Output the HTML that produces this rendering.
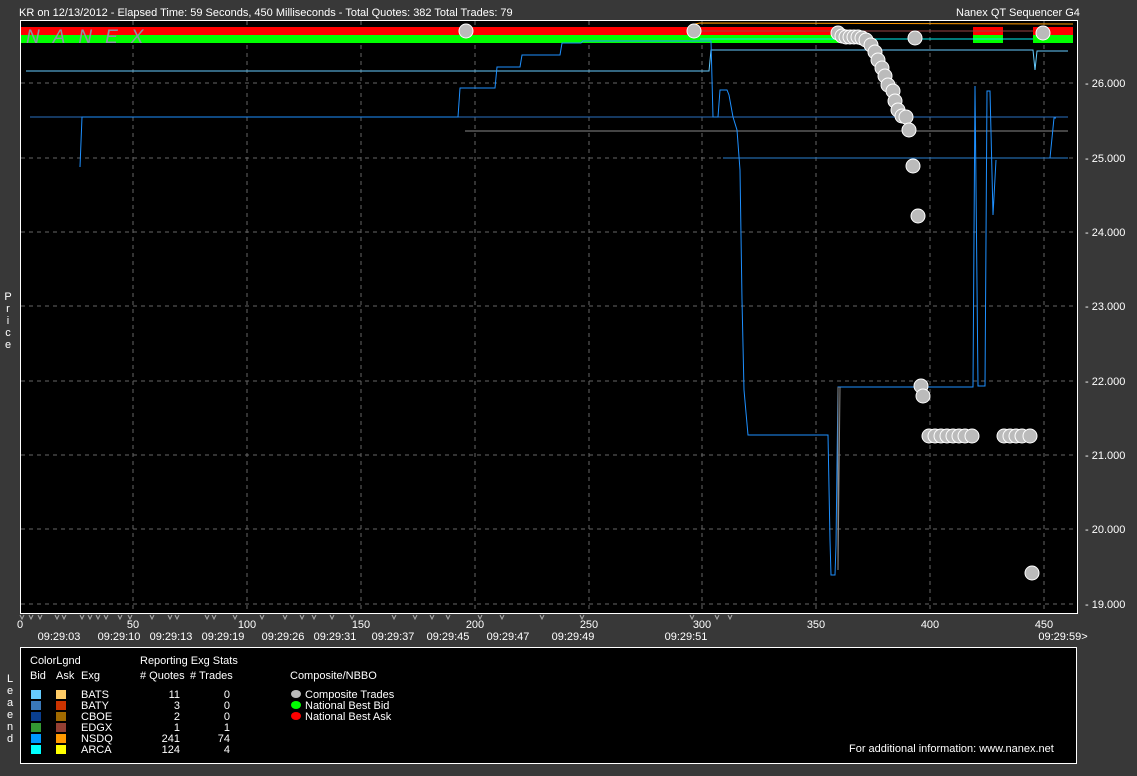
<!DOCTYPE html>
<html><head><meta charset="utf-8"><style>
body{margin:0;background:#383838;width:1137px;height:776px;overflow:hidden;font-family:"Liberation Sans",sans-serif}
svg{display:block}
text{font-family:"Liberation Sans",sans-serif;font-size:11px;fill:#fff}
</style></head><body>
<svg width="1137" height="776" viewBox="0 0 1137 776">
<rect width="1137" height="776" fill="#383838"/>
<text x="19" y="16">KR on 12/13/2012  -  Elapsed Time: 59 Seconds, 450 Milliseconds  -  Total Quotes: 382  Total Trades: 79</text>
<text x="956" y="16">Nanex QT Sequencer G4</text>
<rect x="20.5" y="20.5" width="1057" height="593" fill="#000" stroke="#fff"/>
<g stroke="#666" stroke-dasharray="4,4" stroke-width="1">
<line x1="133" y1="21" x2="133" y2="613"/><line x1="247" y1="21" x2="247" y2="613"/><line x1="361" y1="21" x2="361" y2="613"/><line x1="475" y1="21" x2="475" y2="613"/><line x1="589" y1="21" x2="589" y2="613"/><line x1="702" y1="21" x2="702" y2="613"/><line x1="816" y1="21" x2="816" y2="613"/><line x1="930" y1="21" x2="930" y2="613"/><line x1="1044" y1="21" x2="1044" y2="613"/>
<line x1="21" y1="83" x2="1077" y2="83"/><line x1="21" y1="158" x2="1077" y2="158"/><line x1="21" y1="232" x2="1077" y2="232"/><line x1="21" y1="306" x2="1077" y2="306"/><line x1="21" y1="381" x2="1077" y2="381"/><line x1="21" y1="455" x2="1077" y2="455"/><line x1="21" y1="529" x2="1077" y2="529"/><line x1="21" y1="604" x2="1077" y2="604"/>
</g>
<rect x="21" y="27" width="818" height="8" fill="#f00"/><rect x="21" y="35" width="818" height="8" fill="#0f0"/>
<rect x="973" y="27" width="30" height="8" fill="#f00"/><rect x="973" y="35" width="30" height="8" fill="#0f0"/>
<rect x="1033" y="27" width="40" height="8" fill="#f00"/><rect x="1033" y="35" width="40" height="8" fill="#0f0"/>
<text x="26" y="43" style="font-size:19px;font-style:italic;letter-spacing:13px;fill:#8a96a6">NANEX</text>
<polyline points="690,25 700,23 1073,24" fill="none" stroke="#f90"/>
<polyline points="700,31 1033,31" fill="none" stroke="#944"/>
<polyline points="700,39 1033,39" fill="none" stroke="#0ee"/>
<polyline points="26,71 709,71 711,50 1033,50 1035,70 1037,51 1068,51" fill="none" stroke="#6cf"/>
<polyline points="30,117 1068,117" fill="none" stroke="#2a6fc0"/>
<polyline points="465,131 1068,131" fill="none" stroke="#888"/>
<polyline points="723,158 1068,158" fill="none" stroke="#2a7fd0"/>
<polyline points="80,167 82,117 458,117 460,88 495,88 497,67 520,67 522,55 560,55 562,43 581,43 583,41 711,41 713,117 718,117 720,90 727,90 729,95 733,117 737,130 740,170 742,300 744,390 748,435 828,435 830,540 831,575 835,575 836,545 838,387 973,387 975,86 978,386 985,386 987,91 990,91 993,215 996,160" fill="none" stroke="#1e90ff"/>
<polyline points="838,387 838,570 840,387" fill="none" stroke="#888"/>
<polyline points="1050,158 1054,118 1056,118" fill="none" stroke="#1e90ff"/>
<g fill="#bbb" stroke="#fff" stroke-width="1">
<circle cx="466" cy="31" r="7"/><circle cx="694" cy="31" r="7"/><circle cx="915" cy="38" r="7"/><circle cx="1043" cy="33" r="7"/>
<circle cx="838" cy="33" r="7"/><circle cx="842" cy="36" r="7"/><circle cx="846" cy="37" r="7"/><circle cx="850" cy="37" r="7"/><circle cx="854" cy="37" r="7"/><circle cx="858" cy="37" r="7"/><circle cx="862" cy="38" r="7"/><circle cx="866" cy="40" r="7"/><circle cx="871" cy="45" r="7"/><circle cx="875" cy="52" r="7"/><circle cx="878" cy="60" r="7"/><circle cx="882" cy="68" r="7"/><circle cx="885" cy="76" r="7"/><circle cx="888" cy="85" r="7"/><circle cx="893" cy="91" r="7"/><circle cx="895" cy="101" r="7"/><circle cx="898" cy="110" r="7"/><circle cx="902" cy="116" r="7"/><circle cx="906" cy="117" r="7"/><circle cx="909" cy="130" r="7"/><circle cx="913" cy="166" r="7"/><circle cx="918" cy="216" r="7"/><circle cx="921" cy="386" r="7"/><circle cx="923" cy="396" r="7"/>
<circle cx="929" cy="436" r="7"/><circle cx="935" cy="436" r="7"/><circle cx="941" cy="436" r="7"/><circle cx="947" cy="436" r="7"/><circle cx="953" cy="436" r="7"/><circle cx="959" cy="436" r="7"/><circle cx="965" cy="436" r="7"/><circle cx="972" cy="436" r="7"/>
<circle cx="1004" cy="436" r="7"/><circle cx="1010" cy="436" r="7"/><circle cx="1016" cy="436" r="7"/><circle cx="1022" cy="436" r="7"/><circle cx="1030" cy="436" r="7"/>
<circle cx="1032" cy="573" r="7"/>
</g>
<g>
<text x="1085" y="87">- 26.000</text><text x="1085" y="162">- 25.000</text><text x="1085" y="236">- 24.000</text><text x="1085" y="310">- 23.000</text><text x="1085" y="385">- 22.000</text><text x="1085" y="459">- 21.000</text><text x="1085" y="533">- 20.000</text><text x="1085" y="608">- 19.000</text>
</g>
<g text-anchor="middle">
<text x="8" y="300">P</text><text x="8" y="312">r</text><text x="8" y="324">i</text><text x="8" y="336">c</text><text x="8" y="348">e</text>
<text x="10" y="682">L</text><text x="10" y="694">e</text><text x="10" y="706">a</text><text x="10" y="718">e</text><text x="10" y="730">n</text><text x="10" y="742">d</text>
<text x="20" y="628">0</text><text x="133" y="628">50</text><text x="247" y="628">100</text><text x="361" y="628">150</text><text x="475" y="628">200</text><text x="589" y="628">250</text><text x="702" y="628">300</text><text x="816" y="628">350</text><text x="930" y="628">400</text><text x="1044" y="628">450</text>
<text x="59" y="640">09:29:03</text><text x="119" y="640">09:29:10</text><text x="171" y="640">09:29:13</text><text x="223" y="640">09:29:19</text><text x="283" y="640">09:29:26</text><text x="335" y="640">09:29:31</text><text x="393" y="640">09:29:37</text><text x="448" y="640">09:29:45</text><text x="508" y="640">09:29:47</text><text x="573" y="640">09:29:49</text><text x="686" y="640">09:29:51</text><text x="1063" y="640">09:29:59&gt;</text>
</g>
<g fill="none" stroke="#aaa" stroke-width="1">
<path d="M20,615 l2,4 l2,-4 M29,615 l2,4 l2,-4 M38,615 l2,4 l2,-4 M55,615 l2,4 l2,-4 M62,615 l2,4 l2,-4 M80,615 l2,4 l2,-4 M88,615 l2,4 l2,-4 M96,615 l2,4 l2,-4 M104,615 l2,4 l2,-4 M118,615 l2,4 l2,-4 M128,615 l2,4 l2,-4 M150,615 l2,4 l2,-4 M168,615 l2,4 l2,-4 M175,615 l2,4 l2,-4 M205,615 l2,4 l2,-4 M212,615 l2,4 l2,-4 M233,615 l2,4 l2,-4 M260,615 l2,4 l2,-4 M283,615 l2,4 l2,-4 M300,615 l2,4 l2,-4 M312,615 l2,4 l2,-4 M330,615 l2,4 l2,-4 M350,615 l2,4 l2,-4 M392,615 l2,4 l2,-4 M413,615 l2,4 l2,-4 M430,615 l2,4 l2,-4 M446,615 l2,4 l2,-4 M478,615 l2,4 l2,-4 M500,615 l2,4 l2,-4 M540,615 l2,4 l2,-4 M580,615 l2,4 l2,-4 M690,615 l2,4 l2,-4 M715,615 l2,4 l2,-4 M728,615 l2,4 l2,-4"/>
</g>
<rect x="20.5" y="647.5" width="1056" height="116" fill="#000" stroke="#fff"/>
<text x="30" y="664">ColorLgnd</text><text x="140" y="664">Reporting Exg Stats</text>
<text x="30" y="679">Bid</text><text x="56" y="679">Ask</text><text x="81" y="679">Exg</text><text x="140" y="679"># Quotes</text><text x="190" y="679"># Trades</text><text x="290" y="679">Composite/NBBO</text>
<g>
<rect x="31" y="690" width="10" height="9" fill="#6cf"/><rect x="56" y="690" width="10" height="9" fill="#fc6"/>
<rect x="31" y="701" width="10" height="9" fill="#3a78b8"/><rect x="56" y="701" width="10" height="9" fill="#c30"/>
<rect x="31" y="712" width="10" height="9" fill="#0a3f90"/><rect x="56" y="712" width="10" height="9" fill="#a06a00"/>
<rect x="31" y="723" width="10" height="9" fill="#393"/><rect x="56" y="723" width="10" height="9" fill="#944033"/>
<rect x="31" y="734" width="10" height="9" fill="#09f"/><rect x="56" y="734" width="10" height="9" fill="#f90"/>
<rect x="31" y="745" width="10" height="9" fill="#0ff"/><rect x="56" y="745" width="10" height="9" fill="#ff0"/>
</g>
<text x="81" y="698">BATS</text><text x="81" y="709">BATY</text><text x="81" y="720">CBOE</text><text x="81" y="731">EDGX</text><text x="81" y="742">NSDQ</text><text x="81" y="753">ARCA</text>
<g text-anchor="end"><text x="180" y="698">11</text><text x="180" y="709">3</text><text x="180" y="720">2</text><text x="180" y="731">1</text><text x="180" y="742">241</text><text x="180" y="753">124</text>
<text x="230" y="698">0</text><text x="230" y="709">0</text><text x="230" y="720">0</text><text x="230" y="731">1</text><text x="230" y="742">74</text><text x="230" y="753">4</text></g>
<ellipse cx="296" cy="694" rx="5" ry="4" fill="#bbb"/><ellipse cx="296" cy="705" rx="5" ry="4" fill="#0f0"/><ellipse cx="296" cy="716" rx="5" ry="4" fill="#f00"/>
<text x="305" y="698">Composite Trades</text><text x="305" y="709">National Best Bid</text><text x="305" y="720">National Best Ask</text>
<text x="849" y="752">For additional information: www.nanex.net</text>
</svg>
</body></html>
